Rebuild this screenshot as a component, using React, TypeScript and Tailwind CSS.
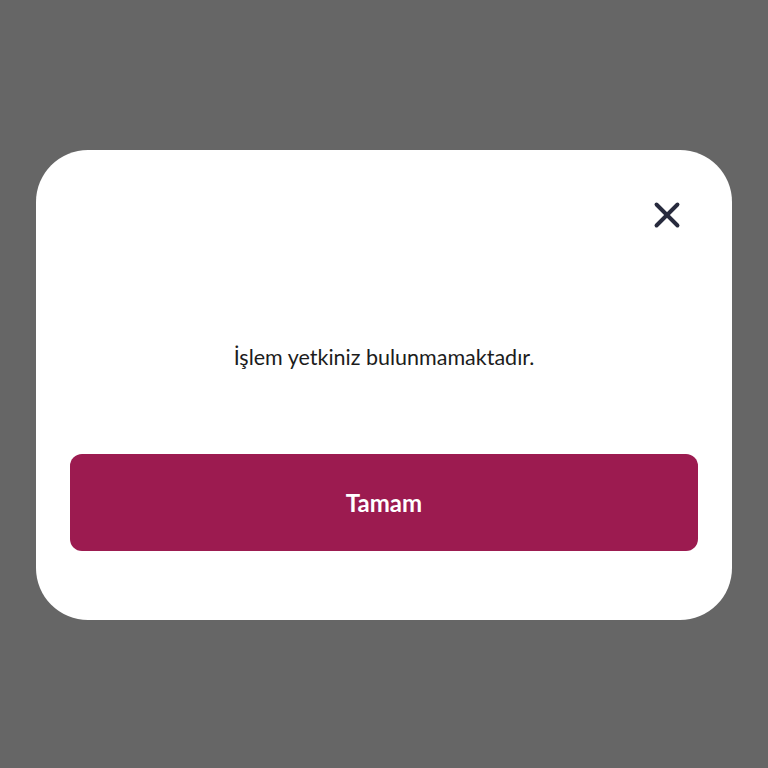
import type { JSX } from 'react';

const CloseIcon = (): JSX.Element => (
  <svg width="28" height="28" viewBox="0 0 28 28" fill="none" stroke="#272a3d" strokeWidth="3.9" strokeLinecap="round">
    <path d="M3.5 3.5 L24.5 24.5" />
    <path d="M24.5 3.5 L3.5 24.5" />
  </svg>
);

export default function App(): JSX.Element {
  return (
    <div className="flex h-[768px] w-full items-start justify-center bg-[#666666] pt-[150px] font-['Lato','Noto_Sans',sans-serif]">
      <div className="flex w-[696px] flex-col rounded-[52px] bg-white px-[34px] pb-[69px] pt-[51px]">
        <div className="flex justify-end pr-[17px]">
          <button type="button" aria-label="Kapat" className="flex h-7 w-7 items-center justify-center">
            <CloseIcon />
          </button>
        </div>
        <p className="mt-[113px] text-center text-[21.5px] leading-[30px] text-[#1c1c1c]">İşlem yetkiniz bulunmamaktadır.</p>
        <button
          type="button"
          className="mt-[82px] flex h-[97px] w-full items-center justify-center rounded-[12px] bg-[#9c1b50] text-[24px] font-bold text-white"
        >
          Tamam
        </button>
      </div>
    </div>
  );
}
